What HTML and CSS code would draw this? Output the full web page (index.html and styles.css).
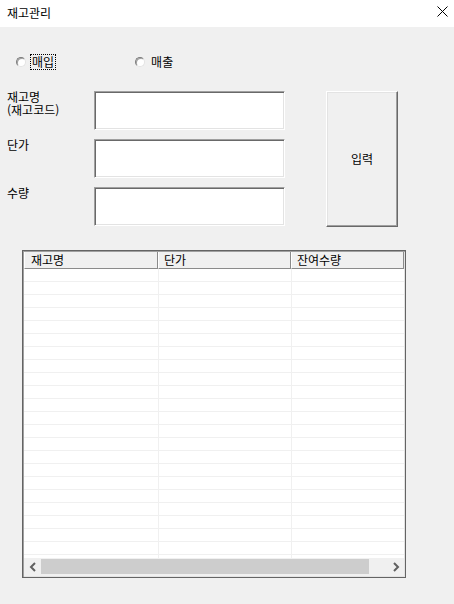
FILE: index.html
```html
<!DOCTYPE html>
<html lang="ko">
<head>
<meta charset="utf-8">
<title>재고관리</title>
<link rel="stylesheet" href="styles.css">
</head>
<body>
<div class="window">
  <header class="titlebar">
    <span class="title">재고관리</span>
    <svg class="close" width="11" height="11" viewBox="0 0 11 11"><path d="M0.5 0.5 L10.5 10.5 M10.5 0.5 L0.5 10.5" stroke="#000" stroke-width="1" fill="none"/></svg>
  </header>
  <main class="content">
    <div class="radios">
      <label class="radio"><span class="dot"></span><span class="rlabel focus">매입</span></label>
      <label class="radio second"><span class="dot"></span><span class="rlabel">매출</span></label>
    </div>
    <div class="form">
      <div class="lbl"><div>재고명</div><div>(재고코드)</div></div>
      <div class="field"></div>
      <div class="btn">입력</div>
      <div class="lbl">단가</div>
      <div class="field"></div>
      <div class="lbl">수량</div>
      <div class="field"></div>
    </div>
    <div class="list">
      <div class="head">
        <div class="hc c1">재고명</div>
        <div class="hc">단가</div>
        <div class="hc">잔여수량</div>
      </div>
      <div class="rows">
        <div class="row"><span></span><span></span><span></span></div>
        <div class="row"><span></span><span></span><span></span></div>
        <div class="row"><span></span><span></span><span></span></div>
        <div class="row"><span></span><span></span><span></span></div>
        <div class="row"><span></span><span></span><span></span></div>
        <div class="row"><span></span><span></span><span></span></div>
        <div class="row"><span></span><span></span><span></span></div>
        <div class="row"><span></span><span></span><span></span></div>
        <div class="row"><span></span><span></span><span></span></div>
        <div class="row"><span></span><span></span><span></span></div>
        <div class="row"><span></span><span></span><span></span></div>
        <div class="row"><span></span><span></span><span></span></div>
        <div class="row"><span></span><span></span><span></span></div>
        <div class="row"><span></span><span></span><span></span></div>
        <div class="row"><span></span><span></span><span></span></div>
        <div class="row"><span></span><span></span><span></span></div>
        <div class="row"><span></span><span></span><span></span></div>
        <div class="row"><span></span><span></span><span></span></div>
        <div class="row"><span></span><span></span><span></span></div>
        <div class="row"><span></span><span></span><span></span></div>
        <div class="row"><span></span><span></span><span></span></div>
        <div class="row"><span></span><span></span><span></span></div>
        <div class="row"><span></span><span></span><span></span></div>
      </div>
      <div class="hscroll">
        <span class="arrow"><svg width="8" height="10" viewBox="0 0 8 10"><path d="M6 1 L2 5 L6 9" stroke="#606060" stroke-width="2" fill="none"/></svg></span>
        <span class="thumb"></span>
        <span class="track"></span>
        <span class="arrow"><svg width="8" height="10" viewBox="0 0 8 10"><path d="M2 1 L6 5 L2 9" stroke="#606060" stroke-width="2" fill="none"/></svg></span>
      </div>
    </div>
  </main>
</div>
</body>
</html>
```

FILE: styles.css
```css
html, body {
  margin: 0;
  padding: 0;
}
body {
  width: 454px;
  height: 604px;
  overflow: hidden;
  background: #f0f0f0;
  color: #000;
  font-family: "Noto Sans CJK KR", "Noto Sans", sans-serif;
  font-size: 12px;
  line-height: 12px;
}
.window {
  width: 454px;
  height: 604px;
}
.titlebar {
  height: 27px;
  background: #fff;
  display: flex;
  align-items: flex-start;
  justify-content: space-between;
  padding: 0 6px 0 7px;
  box-sizing: border-box;
}
.title {
  padding-top: 6px;
  line-height: 14px;
}
.close {
  display: block;
  margin-top: 6px;
}
.content {
  padding: 27px 0 0 7px;
}
.radios {
  display: flex;
  align-items: center;
  height: 16px;
}
.radio {
  display: flex;
  align-items: center;
  margin-left: 9px;
}
.radio.second {
  margin-left: 79px;
}
.dot {
  width: 10px;
  height: 10px;
  box-sizing: border-box;
  border-radius: 50%;
  background: #fff;
  border: 1px solid;
  border-color: #7a7a7a #e3e3e3 #e3e3e3 #7a7a7a;
  box-shadow: inset 1px 1px #a0a0a0;
}
.rlabel {
  margin-left: 4px;
  height: 16px;
  box-sizing: border-box;
  border: 1px dotted transparent;
  padding: 0 1px;
  line-height: 14px;
}
.rlabel.focus {
  border-color: #000;
}
.form {
  margin-top: 21px;
  display: grid;
  grid-template-columns: 87px 191px 41px 72px;
  grid-template-rows: 39px 39px 39px;
  row-gap: 9px;
}
.lbl {
  grid-column: 1;
  line-height: 13px;
  margin-top: -1px;
}
.field {
  grid-column: 2;
  background: #fff;
  border: 1px solid;
  border-color: #a0a0a0 #fff #fff #a0a0a0;
  box-shadow: inset 1px 1px #696969, inset -1px -1px #e3e3e3;
}
.btn {
  grid-column: 4;
  grid-row: 1 / 4;
  height: 136px;
  box-sizing: border-box;
  display: flex;
  align-items: center;
  justify-content: center;
  background: #f0f0f0;
  border: 1px solid;
  border-color: #fff #696969 #696969 #fff;
  box-shadow: inset -1px -1px #a0a0a0, inset 1px 1px #e3e3e3;
}
.list {
  margin-top: 24px;
  margin-left: 15px;
  width: 384px;
  height: 328px;
  box-sizing: border-box;
  border: 1px solid #646464;
  padding: 1px;
  box-shadow: inset 1px 1px #a0a0a0, inset -1px -1px #e3e3e3;
  display: flex;
  flex-direction: column;
  background: #fff;
}
.head {
  display: grid;
  grid-template-columns: 134px 133px 113px;
  height: 17px;
  flex: none;
}
.hc {
  background: #f0f0f0;
  border-left: 1px solid #fff;
  border-right: 1px solid #8a8a8a;
  border-bottom: 1px solid #8a8a8a;
  padding-left: 5px;
  line-height: 16px;
  white-space: nowrap;
}
.hc.c1 {
  padding-left: 6px;
}
.rows {
  height: 289px;
  flex: none;
  overflow: hidden;
  background: #fff;
}
.row {
  display: grid;
  grid-template-columns: 134px 133px 113px;
  height: 13px;
  box-sizing: border-box;
  border-bottom: 1px solid #f0f0f0;
}
.row span + span {
  border-left: 1px solid #f0f0f0;
}
.hscroll {
  flex: 1;
  display: flex;
  background: #f0f0f0;
}
.arrow {
  flex: none;
  width: 17px;
  display: flex;
  align-items: center;
  justify-content: center;
}
.thumb {
  flex: none;
  width: 328px;
  height: 15px;
  margin-top: 1px;
  background: #cdcdcd;
}
.track {
  flex: 1;
}
```
